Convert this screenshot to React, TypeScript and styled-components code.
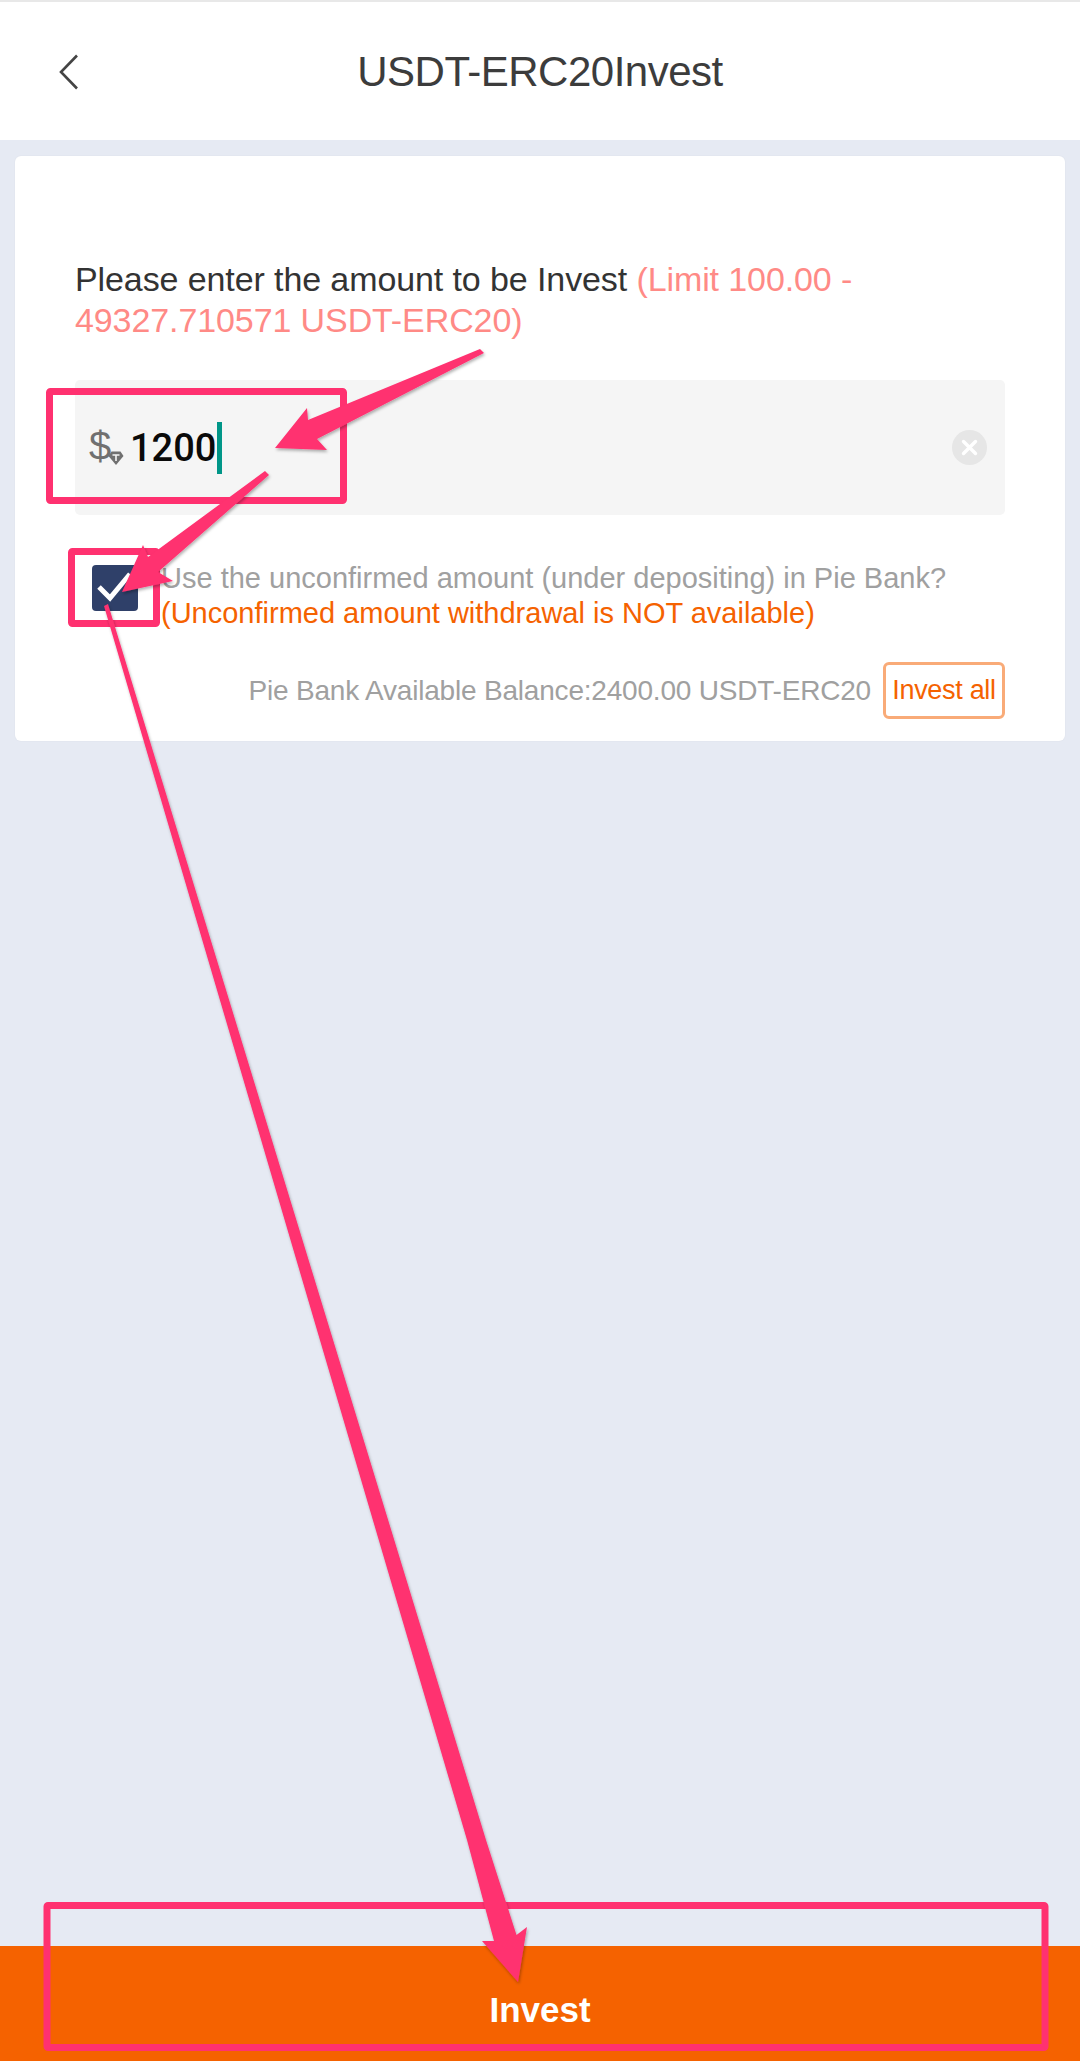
import React from "react";
import styled, { createGlobalStyle } from "styled-components";

const Global = createGlobalStyle`
  html, body { margin: 0; padding: 0; background: #e6eaf3; }
  * { box-sizing: border-box; }
`;
const FONT = `"Liberation Sans", Arial, sans-serif`;

const Page = styled.div`
  position: relative; width: 1080px; height: 2061px; display: flex; flex-direction: column;
  background: #e6eaf3; font-family: ${FONT}; overflow: hidden;
`;
const NavBar = styled.header`
  height: 140px; flex: none; background: #fff; border-top: 2px solid #e8e8e8;
  display: grid; grid-template-columns: 140px 1fr 140px; align-items: center;
`;
const BackButton = styled.div`display: flex; padding-left: 58px; padding-top: 2px;`;
const Title = styled.h1`
  margin: 0; text-align: center; font-size: 42px; font-weight: 400; color: #3c3c3c; letter-spacing: -0.5px;
  padding-top: 2px;
`;
const Content = styled.main`flex: 1; padding: 16px 15px 0;`;
const Card = styled.section`
  height: 585px; background: #fff; border-radius: 6px; padding: 103px 60px 0;
  box-shadow: 0 0 2px rgba(0,0,0,.05);
`;
const Prompt = styled.p`
  margin: 0; font-size: 34px; line-height: 41px; color: #333; letter-spacing: -0.1px;
`;
const Limit = styled.span`color: #ff8a86;`;
const InputBox = styled.div`
  margin-top: 39px; height: 135px; background: #f5f5f5; border-radius: 5px;
  display: flex; align-items: center; padding: 0 18px 0 14px;
`;
const Dollar = styled.span`
  position: relative; width: 41px; font-size: 40px; line-height: 1; color: #707070; margin-top: -3px;
`;
const Badge = styled.svg`position: absolute; left: 19px; top: 24px;`;
const Amount = styled.span`
  font-family: Roboto, sans-serif; font-weight: 500; font-size: 38px; color: #0a0a0a; line-height: 1; margin-top: 0;
`;
const Caret = styled.span`
  width: 5px; height: 52px; background: #009688; margin-left: 1px;
`;
const Clear = styled.svg`margin-left: auto;`;
const ConfirmRow = styled.div`display: flex; margin-top: 46px; align-items: flex-start;`;
const CheckBox = styled.div`
  width: 46px; height: 46px; margin: 4px 0 0 17px; flex: none; border-radius: 4px; background: #2f4069;
  display: flex; align-items: center; justify-content: center;
`;
const ConfirmText = styled.div`margin-left: 23px; font-size: 29px; line-height: 35px;`;
const Gray = styled.div`color: #a0a0a0; white-space: nowrap;`;
const Orange = styled.div`color: #f56200; white-space: nowrap;`;
const BalanceRow = styled.div`
  margin-top: 31px; display: flex; justify-content: flex-end; align-items: center; gap: 12px;
`;
const Balance = styled.span`font-size: 28px; color: #a0a0a0; white-space: nowrap; letter-spacing: -0.2px; padding-top: 1px;`;
const AllButton = styled.button`
  width: 122px; height: 57px; padding: 0; background: #fff; border: 3px solid #f9ab78; border-radius: 6px;
  color: #f56200; font: 400 27px ${FONT}; letter-spacing: -0.3px;
`;
const Footer = styled.button`
  height: 115px; flex: none; border: 0; background: #f56200; color: #fff;
  font: 700 35px ${FONT}; padding: 12px 0 0 0;
`;
const Overlay = styled.svg`position: absolute; left: 0; top: 0; pointer-events: none;`;

const PINK = "#ff3170";

export default function App() {
  return (
    <Page>
      <Global />
      <NavBar>
        <BackButton>
          <svg width="22" height="36" viewBox="0 0 22 36" fill="none">
            <path d="M19 1.5 3 18l16 16.5" stroke="#444" strokeWidth="2.6" />
          </svg>
        </BackButton>
        <Title>USDT-ERC20Invest</Title>
      </NavBar>
      <Content>
        <Card>
          <Prompt>
            Please enter the amount to be Invest <Limit>(Limit 100.00 - 49327.710571 USDT-ERC20)</Limit>
          </Prompt>
          <InputBox>
            <Dollar>
              $
              <Badge width="16" height="16" viewBox="0 0 16 16">
                <path d="M3.5 1.5h9L15.5 6 8 15 .5 6z" fill="#707070" />
                <path d="M4.5 5h7M8 5v6" stroke="#f5f5f5" strokeWidth="1.6" fill="none" />
              </Badge>
            </Dollar>
            <Amount>1200</Amount>
            <Caret />
            <Clear width="35" height="35" viewBox="0 0 35 35">
              <circle cx="17.5" cy="17.5" r="17.5" fill="#e6e6e6" />
              <path d="M11.5 11.5l12 12M23.5 11.5l-12 12" stroke="#fff" strokeWidth="3.4" strokeLinecap="round" />
            </Clear>
          </InputBox>
          <ConfirmRow>
            <CheckBox>
              <svg width="36" height="34" viewBox="0 0 36 34" fill="none">
                <path d="M2 16l11 11L33 3" stroke="#fff" strokeWidth="5" />
              </svg>
            </CheckBox>
            <ConfirmText>
              <Gray>Use the unconfirmed amount (under depositing) in Pie Bank?</Gray>
              <Orange>(Unconfirmed amount withdrawal is NOT available)</Orange>
            </ConfirmText>
          </ConfirmRow>
          <BalanceRow>
            <Balance>Pie Bank Available Balance:2400.00 USDT-ERC20</Balance>
            <AllButton>Invest all</AllButton>
          </BalanceRow>
        </Card>
      </Content>
      <Footer>Invest</Footer>
      <Overlay width="1080" height="2061" viewBox="0 0 1080 2061">
        <defs>
          <filter id="sh" x="-10%" y="-10%" width="120%" height="120%">
            <feDropShadow dx="1" dy="2" stdDeviation="1.5" floodColor="#000" floodOpacity="0.3" />
          </filter>
        </defs>
        <g fill="none" stroke={PINK} strokeLinejoin="round">
          <rect x="49.5" y="391.5" width="294" height="109" strokeWidth="7" rx="1" />
          <rect x="71.5" y="551.5" width="85" height="72" strokeWidth="7" rx="1" />
          <rect x="47" y="1905.5" width="998" height="142" strokeWidth="7" rx="1" />
        </g>
        <g fill={PINK} filter="url(#sh)">
          <polygon points="480,349 484,353 317,439 327,450 275,448 307,408 308,420" />
          <polygon points="265,471 269,475 158,572 173,581 122,592 143,545 148,557" />
          <polygon points="104,606 108,604 486,1840 516.5,1935 527,1927 518,1982 482,1941 494,1941 467,1840" />
        </g>
      </Overlay>
    </Page>
  );
}
